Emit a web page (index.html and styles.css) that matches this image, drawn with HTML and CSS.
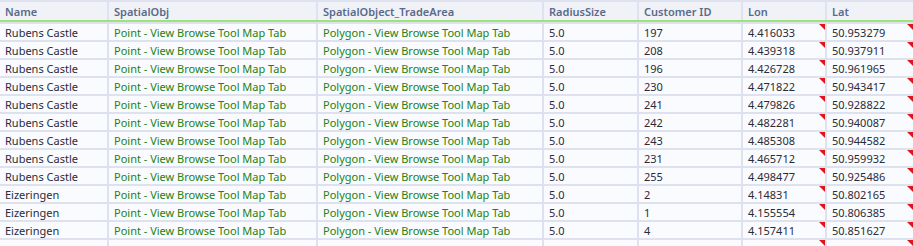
FILE: index.html
```html
<!DOCTYPE html>
<html>
<head>
<meta charset="utf-8">
<link rel="stylesheet" href="styles.css">
</head>
<body>
<div class="grid">
  <div class="row head">
    <div class="c">Name</div><div class="c">SpatialObj</div><div class="c">SpatialObject_TradeArea</div><div class="c">RadiusSize</div><div class="c">Customer ID</div><div class="c">Lon</div><div class="c">Lat</div>
  </div>
  <div class="body">
    <div class="row"><div class="c">Rubens Castle</div><div class="c g">Point - View Browse Tool Map Tab</div><div class="c g">Polygon - View Browse Tool Map Tab</div><div class="c">5.0</div><div class="c">197</div><div class="c f">4.416033</div><div class="c f">50.953279</div></div>
    <div class="row"><div class="c">Rubens Castle</div><div class="c g">Point - View Browse Tool Map Tab</div><div class="c g">Polygon - View Browse Tool Map Tab</div><div class="c">5.0</div><div class="c">208</div><div class="c f">4.439318</div><div class="c f">50.937911</div></div>
    <div class="row"><div class="c">Rubens Castle</div><div class="c g">Point - View Browse Tool Map Tab</div><div class="c g">Polygon - View Browse Tool Map Tab</div><div class="c">5.0</div><div class="c">196</div><div class="c f">4.426728</div><div class="c f">50.961965</div></div>
    <div class="row"><div class="c">Rubens Castle</div><div class="c g">Point - View Browse Tool Map Tab</div><div class="c g">Polygon - View Browse Tool Map Tab</div><div class="c">5.0</div><div class="c">230</div><div class="c f">4.471822</div><div class="c f">50.943417</div></div>
    <div class="row"><div class="c">Rubens Castle</div><div class="c g">Point - View Browse Tool Map Tab</div><div class="c g">Polygon - View Browse Tool Map Tab</div><div class="c">5.0</div><div class="c">241</div><div class="c f">4.479826</div><div class="c f">50.928822</div></div>
    <div class="row"><div class="c">Rubens Castle</div><div class="c g">Point - View Browse Tool Map Tab</div><div class="c g">Polygon - View Browse Tool Map Tab</div><div class="c">5.0</div><div class="c">242</div><div class="c f">4.482281</div><div class="c f">50.940087</div></div>
    <div class="row"><div class="c">Rubens Castle</div><div class="c g">Point - View Browse Tool Map Tab</div><div class="c g">Polygon - View Browse Tool Map Tab</div><div class="c">5.0</div><div class="c">243</div><div class="c f">4.485308</div><div class="c f">50.944582</div></div>
    <div class="row"><div class="c">Rubens Castle</div><div class="c g">Point - View Browse Tool Map Tab</div><div class="c g">Polygon - View Browse Tool Map Tab</div><div class="c">5.0</div><div class="c">231</div><div class="c f">4.465712</div><div class="c f">50.959932</div></div>
    <div class="row"><div class="c">Rubens Castle</div><div class="c g">Point - View Browse Tool Map Tab</div><div class="c g">Polygon - View Browse Tool Map Tab</div><div class="c">5.0</div><div class="c">255</div><div class="c f">4.498477</div><div class="c f">50.925486</div></div>
    <div class="row"><div class="c">Eizeringen</div><div class="c g">Point - View Browse Tool Map Tab</div><div class="c g">Polygon - View Browse Tool Map Tab</div><div class="c">5.0</div><div class="c">2</div><div class="c f">4.14831</div><div class="c f">50.802165</div></div>
    <div class="row"><div class="c">Eizeringen</div><div class="c g">Point - View Browse Tool Map Tab</div><div class="c g">Polygon - View Browse Tool Map Tab</div><div class="c">5.0</div><div class="c">1</div><div class="c f">4.155554</div><div class="c f">50.806385</div></div>
    <div class="row"><div class="c">Eizeringen</div><div class="c g">Point - View Browse Tool Map Tab</div><div class="c g">Polygon - View Browse Tool Map Tab</div><div class="c">5.0</div><div class="c">4</div><div class="c f">4.157411</div><div class="c f">50.851627</div></div>
    <div class="row"><div class="c"></div><div class="c g"></div><div class="c g"></div><div class="c"></div><div class="c"></div><div class="c f"></div><div class="c f"></div></div>
  </div>
</div>
</body>
</html>
```

FILE: styles.css
```css
html, body {
  margin: 0;
  padding: 0;
  background: #dde2ee;
  overflow: hidden;
}
.grid {
  width: 913px;
  height: 246px;
  padding-top: 2px;
  box-sizing: border-box;
  background: #dde2ee;
  font-family: "Noto Sans", "Open Sans", sans-serif;
  font-size: 11px;
}
.row {
  display: grid;
  grid-template-columns: 107px 207px 224px 93px 102px 82px 1fr;
  column-gap: 2px;
  height: 16px;
}
.body {
  display: flex;
  flex-direction: column;
  row-gap: 2px;
  padding-top: 2px;
}
.head {
  height: 18px;
  border-bottom: 2px solid #9ee27a;
}
.c {
  position: relative;
  background: #fafbfe;
  color: #2b2b38;
  line-height: 17px;
  padding-left: 5px;
  white-space: nowrap;
  overflow: hidden;
}
.head .c {
  background: #f0f2f8;
  color: #5a6a8a;
  font-weight: 600;
  line-height: 19px;
}
.c.g {
  color: #23820f;
}
.c.f::after {
  content: "";
  position: absolute;
  top: 0;
  right: 0;
  width: 0;
  height: 0;
  border-top: 6px solid #e0141c;
  border-left: 6px solid transparent;
}
```
